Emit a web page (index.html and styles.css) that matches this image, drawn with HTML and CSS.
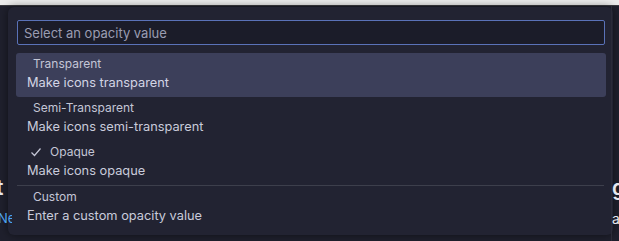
FILE: index.html
```html
<!DOCTYPE html>
<html lang="en">
<head>
	<meta charset="UTF-8">
	<title>Select an opacity value</title>
	<link rel="stylesheet" href="styles.css">
</head>
<body>
<div class="titlebar"></div>
<div class="workbench">
	<div class="side side-left">
		<div class="side-title">t</div>
		<div class="side-link">Ne</div>
	</div>
	<div class="side side-right">
		<div class="side-title">g</div>
		<div class="side-text">a</div>
	</div>
</div>

<div class="quick-pick">
	<div class="quick-input">
		<input type="text" placeholder="Select an opacity value" autofocus>
	</div>
	<div class="pick-list">
		<div class="pick-item selected">
			<div class="pick-label">Transparent</div>
			<div class="pick-desc">Make icons transparent</div>
		</div>
		<div class="pick-item">
			<div class="pick-label">Semi-Transparent</div>
			<div class="pick-desc">Make icons semi-transparent</div>
		</div>
		<div class="pick-item">
			<div class="pick-label checked">
				<svg class="check" width="12" height="12" viewBox="0 0 12 12"><path d="M1.5 6.5 L4.5 9.5 L10.5 2.5" fill="none" stroke="currentColor" stroke-width="1.2"/></svg>
				Opaque
			</div>
			<div class="pick-desc">Make icons opaque</div>
		</div>
		<div class="pick-separator"></div>
		<div class="pick-item">
			<div class="pick-label">Custom</div>
			<div class="pick-desc">Enter a custom opacity value</div>
		</div>
	</div>
</div>
</body>
</html>
```

FILE: styles.css
```css
html, body {
	margin: 0;
	height: 100%;
	overflow: hidden;
}
body {
	font-family: Inter, "Liberation Sans", sans-serif;
	background-color: #1f202d;
	color: #c9cbdb;
	position: relative;
}
.titlebar {
	height: 5px;
	background-color: #ececec;
	border-bottom: 1px solid #3b3b40;
}
.workbench {
	display: flex;
	justify-content: space-between;
	height: 235px;
}
.side {
	overflow: hidden;
	padding-top: 170px;
	white-space: nowrap;
	position: relative;
	z-index: 2; /* edge of the editor peeks past the quick pick */
}
.side-left {
	width: 12px;
}
.side-right {
	width: 7px;
	border-left: 1px solid #2a2b38;
}
.side-title {
	font-size: 21px;
	font-weight: 600;
	color: #e6e7ef;
	line-height: 24px;
}
.side-left .side-title {
	margin-left: -4px;
}
.side-link {
	font-size: 13px;
	color: #4da3f0;
	margin-top: 10px;
	margin-left: -2px;
}
.side-text {
	font-size: 14px;
	color: #e6e7ef;
	margin-top: 10px;
}

/* quick pick overlay */
.quick-pick {
	position: absolute;
	top: 7px;
	left: 8px;
	width: 605px;
	height: 228px;
	background-color: #222332;
	border-radius: 6px;
	box-shadow: 0 0 8px rgba(0, 0, 0, 0.5);
	padding: 13px 7px 0 8px;
	box-sizing: border-box;
	z-index: 1;
}
.quick-input {
	margin: 0 1px 8px 1px;
}
.quick-input input {
	display: block;
	width: 100%;
	box-sizing: border-box;
	height: 25px;
	padding: 0 6px;
	background-color: #1b1c29;
	border: 1px solid #5a72b8;
	border-radius: 2px;
	outline: none;
	font-family: inherit;
	font-size: 13px;
	color: #d6d8e6;
	caret-color: #d6d8e6;
}
.quick-input input::placeholder {
	color: #9a9cb2;
}
.pick-list {
	display: flex;
	flex-direction: column;
}
.pick-item {
	height: 44px;
	padding: 3px 11px 0 11px;
	box-sizing: border-box;
	border-radius: 3px;
}
.pick-item.selected {
	background-color: #3c3f5a;
	color: #d3d5e5;
}
.pick-label {
	font-size: 12px;
	line-height: 16px;
	padding-left: 6px;
	display: flex;
	align-items: center;
	color: #c4c6d6;
}
.pick-label.checked {
	padding-left: 3px;
}
.check {
	margin-right: 8px;
}
.pick-desc {
	font-size: 12.8px;
	line-height: 20px;
	margin-top: 1px;
}
.pick-separator {
	height: 1px;
	background-color: #3d3f4c;
	margin: 0 2px 0 1px;
}
```
